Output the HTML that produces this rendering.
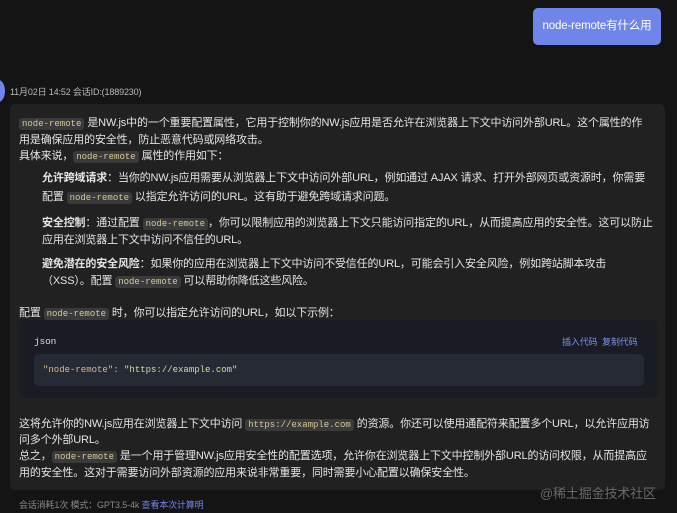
<!DOCTYPE html>
<html><head><meta charset="utf-8"><style>
body{margin:0;width:677px;height:505px;background:#141414;overflow:hidden;position:relative;font-family:"Liberation Sans","Noto Sans CJK SC",sans-serif;font-size:11px;color:#e4e4e4;letter-spacing:-0.15px}
.a{position:absolute;white-space:nowrap;line-height:16px}
code{font-family:"Liberation Mono",monospace;font-size:9px;background:#3a3a3a;color:#d8c89a;border-radius:3px;padding:1px 3px;letter-spacing:0}
b{font-weight:bold}
</style></head><body>
<div class="a" style="left:533px;top:8px;width:128px;height:37px;background:#6f85ea;border-radius:5px;color:#fff;line-height:37px;text-align:center;font-size:11.5px">node-remote有什么用</div>
<div style="position:absolute;left:-8px;top:80px;width:13px;height:22px;border-radius:50%;background:#6f85ea"></div>
<div class="a" style="left:10px;top:84px;font-size:9px;color:#bbb">11月02日 14:52 会话ID:(1889230)</div>
<div style="position:absolute;left:10px;top:104px;width:655px;height:386px;background:#212121;border-radius:5px"></div>
<div class="a" style="left:19px;top:115px"><code>node-remote</code> 是NW.js中的一个重要配置属性，它用于控制你的NW.js应用是否允许在浏览器上下文中访问外部URL。这个属性的作</div>
<div class="a" style="left:19px;top:132px">用是确保应用的安全性，防止恶意代码或网络攻击。</div>
<div class="a" style="left:19px;top:148px">具体来说，<code>node-remote</code> 属性的作用如下：</div>
<div class="a" style="left:42px;top:170px"><b>允许跨域请求</b>：当你的NW.js应用需要从浏览器上下文中访问外部URL，例如通过 AJAX 请求、打开外部网页或资源时，你需要</div>
<div class="a" style="left:42px;top:189px">配置 <code>node-remote</code> 以指定允许访问的URL。这有助于避免跨域请求问题。</div>
<div class="a" style="left:42px;top:215px"><b>安全控制</b>：通过配置 <code>node-remote</code>，你可以限制应用的浏览器上下文只能访问指定的URL，从而提高应用的安全性。这可以防止</div>
<div class="a" style="left:42px;top:232px">应用在浏览器上下文中访问不信任的URL。</div>
<div class="a" style="left:42px;top:256px"><b>避免潜在的安全风险</b>：如果你的应用在浏览器上下文中访问不受信任的URL，可能会引入安全风险，例如跨站脚本攻击</div>
<div class="a" style="left:42px;top:273px">（XSS）。配置 <code>node-remote</code> 可以帮助你降低这些风险。</div>
<div class="a" style="left:19px;top:305px">配置 <code>node-remote</code> 时，你可以指定允许访问的URL，如以下示例：</div>
<div style="position:absolute;left:19px;top:320px;width:639px;height:78px;background:#191c22;border-radius:5px"></div>
<div class="a" style="left:34px;top:334px;font-family:'Liberation Mono',monospace;font-size:9.5px;color:#ddd">json</div>
<div class="a" style="left:562px;top:334px;font-size:9px;color:#7b8ff0">插入代码&nbsp;&nbsp;复制代码</div>
<div style="position:absolute;left:34px;top:354px;width:610px;height:32px;background:#262a33;border-radius:5px"></div>
<div class="a" style="left:43px;top:362px;font-family:'Liberation Mono',monospace;font-size:9px;color:#d8b888;letter-spacing:0">"node-remote": <span style="color:#c6e0a0">"https://example.com"</span></div>
<div class="a" style="left:19px;top:416px">这将允许你的NW.js应用在浏览器上下文中访问 <code>https://example.com</code> 的资源。你还可以使用通配符来配置多个URL，以允许应用访</div>
<div class="a" style="left:19px;top:432px">问多个外部URL。</div>
<div class="a" style="left:19px;top:448px">总之，<code>node-remote</code> 是一个用于管理NW.js应用安全性的配置选项，允许你在浏览器上下文中控制外部URL的访问权限，从而提高应</div>
<div class="a" style="left:19px;top:465px">用的安全性。这对于需要访问外部资源的应用来说非常重要，同时需要小心配置以确保安全性。</div>
<div class="a" style="left:540px;top:484px;font-size:13px;color:#6a6a6a;line-height:20px">@稀土掘金技术社区</div>
<div class="a" style="left:19px;top:497px;font-size:9px;color:#888">会话消耗1次 模式：GPT3.5-4k <span style="color:#6f85ea">查看本次计算明</span></div>
</body></html>
